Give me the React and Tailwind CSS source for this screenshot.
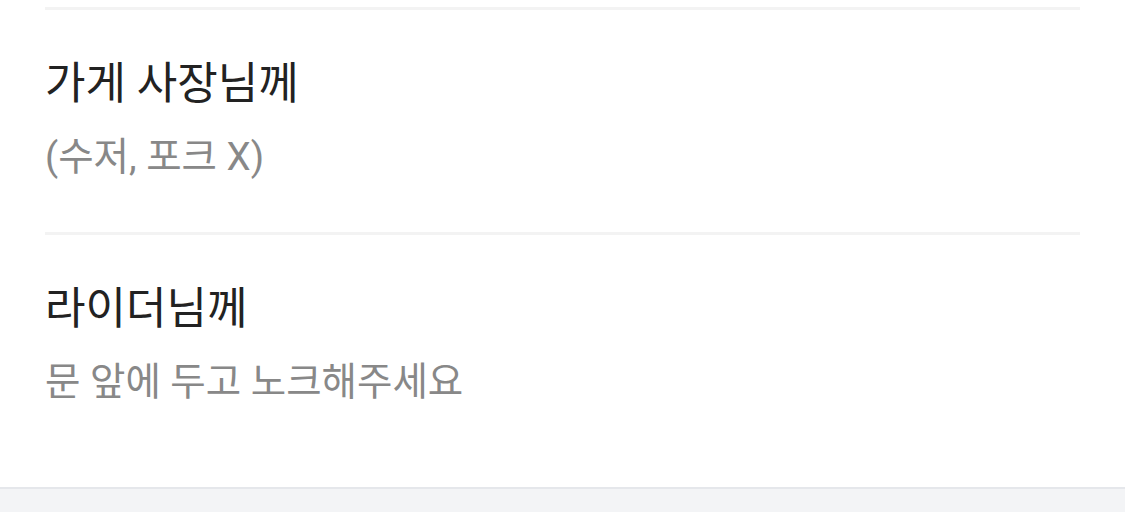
const FONT = "font-['Roboto','Noto_Sans_CJK_KR',sans-serif]";

const notes = [
  { to: "가게 사장님께", text: "(수저, 포크 X)" },
  { to: "라이더님께", text: "문 앞에 두고 노크해주세요" },
];

export default function App() {
  return (
    <div className={`w-[1125px] h-[512px] overflow-hidden bg-white flex flex-col ${FONT}`}>
      <div className="px-[45px] pt-[7px]">
        {notes.map((n) => (
          <div key={n.to} className="border-t-[3px] border-[#f3f3f3] pt-[48px] pb-[52px]">
            <div className="text-[44px] leading-[52px] text-[#222222]">{n.to}</div>
            <div className="mt-[24px] text-[38.5px] leading-[46px] text-[#888888]">{n.text}</div>
          </div>
        ))}
      </div>
      <div className="flex-1" />
      <div className="h-[25px] bg-[#f3f4f6] border-t-[2px] border-[#e5e7eb]" />
    </div>
  );
}
